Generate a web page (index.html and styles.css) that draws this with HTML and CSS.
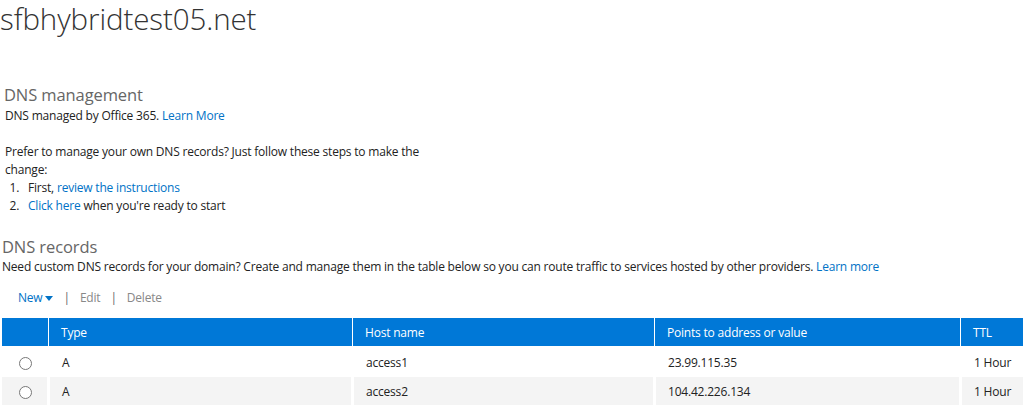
FILE: index.html
```html
<!DOCTYPE html>
<html lang="en">
<head>
<meta charset="utf-8">
<title>sfbhybridtest05.net</title>
<link rel="stylesheet" href="styles.css">
</head>
<body>
<h1 class="title">sfbhybridtest05.net</h1>

<section class="mgmt">
  <h2 class="heading">DNS management</h2>
  <p class="text">DNS managed by Office 365. <a class="link" href="#">Learn More</a></p>
  <p class="text prefer">Prefer to manage your own DNS records? Just follow these steps to make the change:</p>
  <ol class="steps">
    <li>First, <a class="link" href="#">review the instructions</a></li>
    <li><a class="link" href="#">Click here</a> when you're ready to start</li>
  </ol>
</section>

<section class="records">
  <h2 class="heading">DNS records</h2>
  <p class="text">Need custom DNS records for your domain? Create and manage them in the table below so you can route traffic to services hosted by other providers. <a class="link" href="#">Learn more</a></p>
  <div class="toolbar">
    <a class="tool new" href="#">New<svg class="caret" width="8" height="5" viewBox="0 0 8 5" aria-hidden="true"><path d="M0 0H8L4 5Z" fill="currentColor"/></svg></a>
    <span class="sep">|</span>
    <span class="tool disabled">Edit</span>
    <span class="sep">|</span>
    <span class="tool disabled">Delete</span>
  </div>
  <table class="grid">
    <colgroup>
      <col class="c-sel"><col class="c-type"><col class="c-host"><col class="c-points"><col class="c-ttl">
    </colgroup>
    <thead>
      <tr><th></th><th>Type</th><th>Host name</th><th>Points to address or value</th><th>TTL</th></tr>
    </thead>
    <tbody>
      <tr><td><span class="radio"></span></td><td>A</td><td>access1</td><td>23.99.115.35</td><td>1 Hour</td></tr>
      <tr class="alt"><td><span class="radio"></span></td><td>A</td><td>access2</td><td>104.42.226.134</td><td>1 Hour</td></tr>
    </tbody>
  </table>
</section>
</body>
</html>
```
FILE: styles.css
```css
* { box-sizing: border-box; }
html, body { margin: 0; padding: 0; background: #fff; }
body {
  font-family: "Open Sans", "Noto Sans", sans-serif;
  font-size: 12px;
  letter-spacing: -0.2px;
  color: #222;
  overflow: hidden;
}
.title {
  margin: 0;
  padding-top: 1px;
  font-weight: 300;
  font-size: 29.5px;
  letter-spacing: -0.1px;
  line-height: 35px;
  color: #333;
}
.heading {
  margin: 0;
  font-weight: 400;
  font-size: 16.5px;
  letter-spacing: -0.1px;
  line-height: 18px;
  color: #666;
}
.text { margin: 0; line-height: 18px; }
.link { color: #0072c6; text-decoration: none; }
.mgmt {
  margin-top: 50px;
  padding-left: 4px;
  width: 440px;
}
.mgmt .text { padding-left: 1px; }
.mgmt .heading + .text { margin-top: 3px; }
.prefer { margin-top: 18px; }
.steps {
  margin: 0;
  padding-left: 24px;
  line-height: 18px;
}
.steps li::marker { content: counter(list-item) ".\00a0\00a0\00a0"; }
.records {
  margin-top: 23px;
  padding-left: 2px;
}
.records .heading + .text { margin-top: 2px; }
.toolbar {
  display: flex;
  align-items: center;
  gap: 10px;
  padding-left: 16px;
  margin-top: 13px;
  line-height: 18px;
}
.tool { text-decoration: none; }
.new { color: #0072c6; display: inline-flex; align-items: center; gap: 3px; }
.caret { display: block; margin-top: 1px; }
.sep { color: #666; }
.disabled { color: #888; }
.grid {
  margin-top: 11px;
  width: 1021px;
  table-layout: fixed;
  border-collapse: separate;
  border-spacing: 0;
}
.c-sel { width: 46px; }
.c-type { width: 304px; }
.c-host { width: 302px; }
.c-points { width: 306px; }
.c-ttl { width: 63px; }
.grid th {
  background: #0078d7;
  color: #fff;
  font-weight: 400;
  text-align: left;
  height: 28px;
  padding: 0 0 0 12px;
  border-left: 1px solid #fff;
}
.grid th:first-child { border-left: 0; }
.grid td {
  height: 30px;
  padding: 1px 0 0 12px;
  border-top: 1px solid #fff;
  border-bottom: 1px solid #fff;
  border-left: 2px solid #fff;
  border-right: 1px solid #fff;
  color: #222;
}
.grid td:first-child { border-left: 0; padding: 1px 0 0 1px; text-align: center; }
.grid td:last-child { border-right: 0; }
.grid tbody tr:first-child td { border-top-width: 2px; }
.grid .alt td { background: #f4f4f4; }
.radio {
  display: inline-block;
  width: 13px;
  height: 13px;
  border: 1px solid #777;
  border-radius: 50%;
  vertical-align: middle;
  background: #fff;
}
```
